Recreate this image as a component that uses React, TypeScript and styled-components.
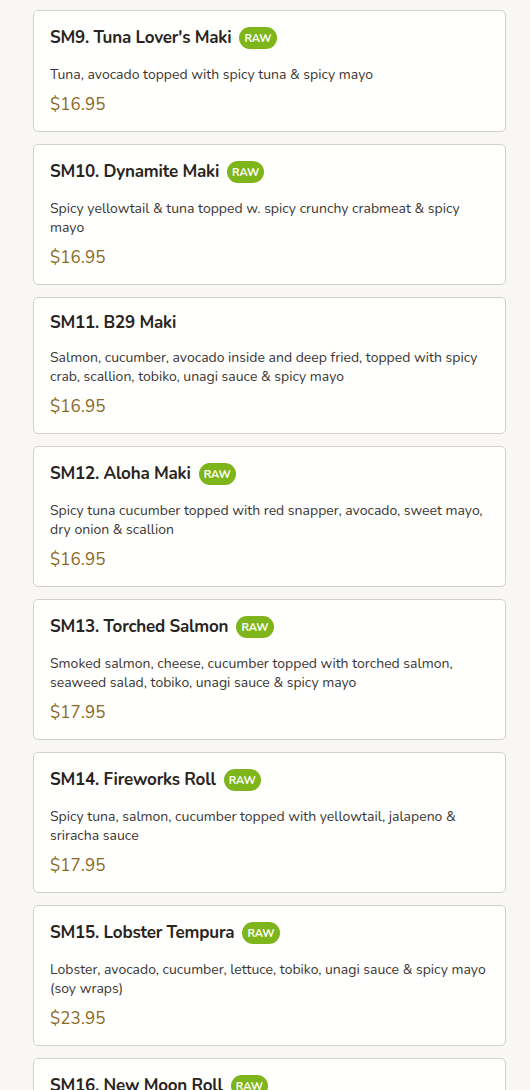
import React from 'react';
import styled, { createGlobalStyle } from 'styled-components';

const GlobalStyle = createGlobalStyle`
  * {
    margin: 0;
    padding: 0;
    box-sizing: border-box;
  }

  body {
    font-family: 'Nunito', 'Lato', 'Noto Sans', sans-serif;
    background: #f8f7f5;
    color: #2b2622;
    overflow: hidden;
  }
`;

const Page = styled.div`
  display: flex;
  flex-direction: column;
  gap: 12px;
  padding: 10px 24px 0 33px;
`;

const Card = styled.div`
  background: #fffffe;
  border: 1px solid #d2d0cc;
  border-radius: 5px;
  padding: 13px 16px 14px 16px;
`;

const TitleRow = styled.div`
  display: flex;
  align-items: center;
  gap: 8px;
`;

const Title = styled.h3`
  font-size: 17px;
  font-weight: 700;
  line-height: 24px;
  color: #2a2420;
  letter-spacing: -0.2px;
`;

const Badge = styled.span`
  display: inline-flex;
  align-items: center;
  justify-content: center;
  height: 22px;
  margin: 3px 0;
  padding: 0 5px;
  border-radius: 11px;
  background: #7db51a;
  color: #ffffff;
  font-size: 11px;
  font-weight: 700;
`;

const Desc = styled.p`
  margin-top: 13px;
  font-size: 14px;
  line-height: 19px;
  color: #3a3632;
`;

const Price = styled.div`
  margin-top: 9px;
  font-size: 17px;
  line-height: 24px;
  color: #8a6a1f;
  letter-spacing: 0.1px;
`;

type Item = { code: string; name: string; raw: boolean; desc: string; price: string };

const items: Item[] = [
  { code: 'SM9', name: "Tuna Lover's Maki", raw: true, desc: 'Tuna, avocado topped with spicy tuna & spicy mayo', price: '$16.95' },
  { code: 'SM10', name: 'Dynamite Maki', raw: true, desc: 'Spicy yellowtail & tuna topped w. spicy crunchy crabmeat & spicy mayo', price: '$16.95' },
  { code: 'SM11', name: 'B29 Maki', raw: false, desc: 'Salmon, cucumber, avocado inside and deep fried, topped with spicy crab, scallion, tobiko, unagi sauce & spicy mayo', price: '$16.95' },
  { code: 'SM12', name: 'Aloha Maki', raw: true, desc: 'Spicy tuna cucumber topped with red snapper, avocado, sweet mayo, dry onion & scallion', price: '$16.95' },
  { code: 'SM13', name: 'Torched Salmon', raw: true, desc: 'Smoked salmon, cheese, cucumber topped with torched salmon, seaweed salad, tobiko, unagi sauce & spicy mayo', price: '$17.95' },
  { code: 'SM14', name: 'Fireworks Roll', raw: true, desc: 'Spicy tuna, salmon, cucumber topped with yellowtail, jalapeno & sriracha sauce', price: '$17.95' },
  { code: 'SM15', name: 'Lobster Tempura', raw: true, desc: 'Lobster, avocado, cucumber, lettuce, tobiko, unagi sauce & spicy mayo (soy wraps)', price: '$23.95' },
  { code: 'SM16', name: 'New Moon Roll', raw: true, desc: 'Spicy salmon, cucumber topped with salmon, avocado & spicy mayo', price: '$17.95' },
];

function App() {
  return (
    <>
      <GlobalStyle />
      <Page>
        {items.map((it) => (
          <Card key={it.code}>
            <TitleRow>
              <Title>{it.code}. {it.name}</Title>
              {it.raw && <Badge>RAW</Badge>}
            </TitleRow>
            <Desc>{it.desc}</Desc>
            <Price>{it.price}</Price>
          </Card>
        ))}
      </Page>
    </>
  );
}

export default App;
